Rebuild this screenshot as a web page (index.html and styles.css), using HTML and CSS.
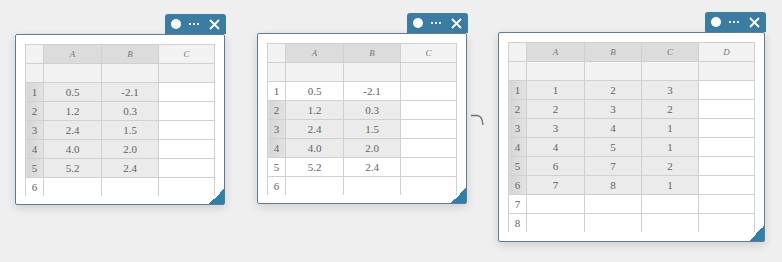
FILE: index.html
```html
<!DOCTYPE html>
<html lang="en">

<head>
    <meta charset="UTF-8">
    <title>Tables</title>
    <link rel="stylesheet" href="styles.css">
</head>

<body>

    <!-- table 1 -->
    <div class="window win-1">
        <div class="toolbar">
            <span class="dot"></span>
            <span class="more"><i></i><i></i><i></i></span>
            <svg class="close" width="11" height="11" viewBox="0 0 11 11"><path d="M1 1L10 10M10 1L1 10" stroke="#fff" stroke-width="1.8"/></svg>
        </div>
        <div class="sheet">
            <table>
                <colgroup><col class="c-num"><col class="c-a"><col class="c-b"><col class="c-c"></colgroup>
                <tr class="head"><td></td><td class="sel">A</td><td class="sel">B</td><td>C</td></tr>
                <tr class="names"><td></td><td></td><td></td><td></td></tr>
                <tr class="on"><td>1</td><td>0.5</td><td>-2.1</td><td class="free"></td></tr>
                <tr class="on"><td>2</td><td>1.2</td><td>0.3</td><td class="free"></td></tr>
                <tr class="on"><td>3</td><td>2.4</td><td>1.5</td><td class="free"></td></tr>
                <tr class="on"><td>4</td><td>4.0</td><td>2.0</td><td class="free"></td></tr>
                <tr class="on"><td>5</td><td>5.2</td><td>2.4</td><td class="free"></td></tr>
                <tr><td>6</td><td></td><td></td><td></td></tr>
            </table>
        </div>
        <span class="grip"></span>
    </div>

    <!-- table 2 -->
    <div class="window win-2">
        <div class="toolbar">
            <span class="dot"></span>
            <span class="more"><i></i><i></i><i></i></span>
            <svg class="close" width="11" height="11" viewBox="0 0 11 11"><path d="M1 1L10 10M10 1L1 10" stroke="#fff" stroke-width="1.8"/></svg>
        </div>
        <div class="sheet">
            <table>
                <colgroup><col class="c-num"><col class="c-a"><col class="c-b"><col class="c-c"></colgroup>
                <tr class="head"><td></td><td class="sel">A</td><td class="sel">B</td><td>C</td></tr>
                <tr class="names"><td></td><td></td><td></td><td></td></tr>
                <tr><td>1</td><td>0.5</td><td>-2.1</td><td></td></tr>
                <tr class="on"><td>2</td><td>1.2</td><td>0.3</td><td class="free"></td></tr>
                <tr class="on"><td>3</td><td>2.4</td><td>1.5</td><td class="free"></td></tr>
                <tr class="on"><td>4</td><td>4.0</td><td>2.0</td><td class="free"></td></tr>
                <tr><td>5</td><td>5.2</td><td>2.4</td><td></td></tr>
                <tr><td>6</td><td></td><td></td><td></td></tr>
            </table>
        </div>
        <span class="grip"></span>
    </div>

    <svg class="hook" width="16" height="14" viewBox="0 0 16 14"><path d="M1 1.5H7C10 1.5 12.5 4.5 13 11" fill="none" stroke="#707070" stroke-width="1.3"/></svg>

    <!-- table 3 -->
    <div class="window win-3">
        <div class="toolbar">
            <span class="dot"></span>
            <span class="more"><i></i><i></i><i></i></span>
            <svg class="close" width="11" height="11" viewBox="0 0 11 11"><path d="M1 1L10 10M10 1L1 10" stroke="#fff" stroke-width="1.8"/></svg>
        </div>
        <div class="sheet tall">
            <table class="wide">
                <colgroup><col class="c-num"><col class="c-a"><col class="c-b"><col class="c-b"><col class="c-c"></colgroup>
                <tr class="head"><td></td><td class="sel">A</td><td class="sel">B</td><td class="sel">C</td><td>D</td></tr>
                <tr class="names"><td></td><td></td><td></td><td></td><td></td></tr>
                <tr class="on"><td>1</td><td>1</td><td>2</td><td>3</td><td class="free"></td></tr>
                <tr class="on"><td>2</td><td>2</td><td>3</td><td>2</td><td class="free"></td></tr>
                <tr class="on"><td>3</td><td>3</td><td>4</td><td>1</td><td class="free"></td></tr>
                <tr class="on"><td>4</td><td>4</td><td>5</td><td>1</td><td class="free"></td></tr>
                <tr class="on"><td>5</td><td>6</td><td>7</td><td>2</td><td class="free"></td></tr>
                <tr class="on"><td>6</td><td>7</td><td>8</td><td>1</td><td class="free"></td></tr>
                <tr><td>7</td><td></td><td></td><td></td><td></td></tr>
                <tr><td>8</td><td></td><td></td><td></td><td></td></tr>
            </table>
        </div>
        <span class="grip"></span>
    </div>

</body>

</html>
```

FILE: styles.css
```css
/* RESET */
* {
    margin: 0;
    padding: 0;
    box-sizing: border-box;
}

body {
    background-color: #efefef;
    font-family: 'Liberation Serif', 'DejaVu Serif', serif;
    color: #555;
    width: 782px;
    height: 262px;
    overflow: hidden;
    position: relative;
}

/* WINDOWS (free canvas) */
.window {
    position: absolute;
    background-color: #fff;
    border: 1px solid #5d7d96;
    border-radius: 2px;
    padding: 9px 9px 8px;
    box-shadow: 0 3px 10px rgba(0, 0, 0, 0.14);
}

.win-1 { left: 15px; top: 34px; }
.win-2 { left: 257px; top: 33px; }
.win-3 { left: 498px; top: 32px; padding-bottom: 9px; }

.toolbar {
    position: absolute;
    right: -2px;
    top: -21px;
    width: 61px;
    height: 20px;
    background-color: #3a7ca2;
    border-radius: 3px 3px 0 0;
    display: flex;
    align-items: center;
    padding: 0 6px 0 6px;
}

.toolbar .dot {
    width: 10px;
    height: 10px;
    border-radius: 50%;
    background-color: #fff;
}

.toolbar .more {
    display: flex;
    gap: 2px;
    margin-left: 8px;
}

.toolbar .more i {
    width: 2px;
    height: 2px;
    background-color: #e8f0f5;
}

.toolbar .close {
    margin-left: auto;
}

.grip {
    position: absolute;
    right: 0;
    bottom: 0;
    width: 15px;
    height: 15px;
    background: linear-gradient(135deg, transparent 50%, #2f7fa9 50%);
}

.hook {
    position: absolute;
    left: 470px;
    top: 114px;
}

/* SHEET */
.sheet {
    height: 152px;
    overflow: hidden;
}

.sheet.tall {
    height: 190px;
}

table {
    border-collapse: collapse;
    table-layout: fixed;
    width: 189px;
}

table.wide {
    width: 246px;
}

.c-num { width: 18px; }
.c-a { width: 58px; }
.c-b { width: 57px; }
.c-c { width: 56px; }

td {
    height: 19px;
    border: 1px solid #d0d0d0;
    text-align: center;
    font-size: 11px;
    line-height: 17px;
    color: #636363;
    background-color: #fff;
}

.head td {
    font-style: italic;
    font-size: 9px;
    color: #777;
    background-color: #f2f2f2;
}

.head td.sel {
    background-color: #dcdcdc;
}

.names td {
    background-color: #f2f2f2;
}

.on td {
    background-color: #ebebeb;
}

.on td:first-child {
    background: linear-gradient(90deg, #d6d6d6, #e2e2e2);
}

.on td.free {
    background-color: #fff;
}
```
